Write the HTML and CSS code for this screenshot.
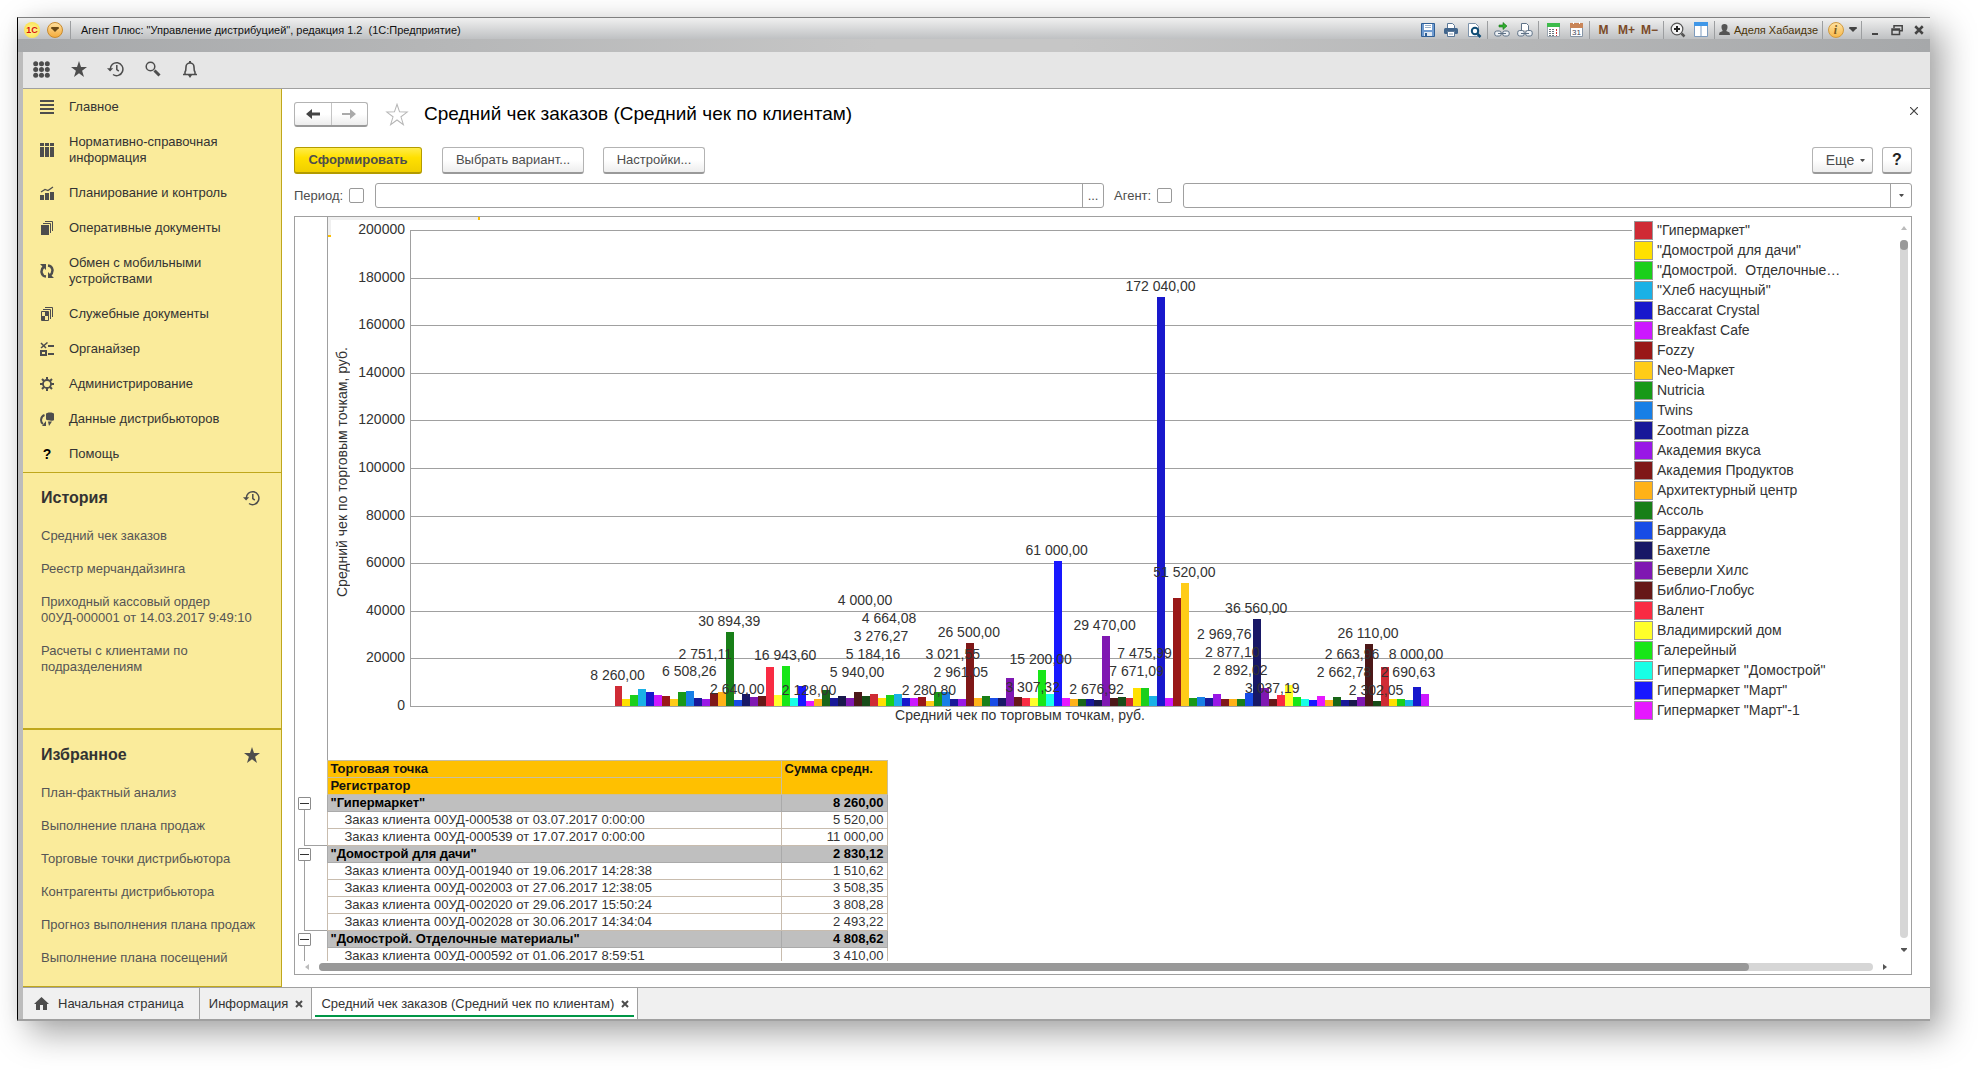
FILE: index.html
```html
<!DOCTYPE html>
<html lang="ru">
<head>
<meta charset="utf-8">
<title>Агент Плюс: "Управление дистрибуцией"</title>
<link rel="stylesheet" href="styles.css">
</head>
<body>
<svg class="defs" aria-hidden="true">
  <symbol id="i-star" viewBox="0 0 16 16"><path d="M8 0l2 5.900 6 .2-4.900 3.700L13 16l-5-3.700L3 16l1.900-6.200L0 6.100l6-.2z"/></symbol>
  <symbol id="i-history" viewBox="0 0 17 16"><path fill="none" stroke="currentColor" stroke-width="1.500" d="M3.300 8.500A6.300 6.500 0 1 1 6 13.500M9.800 4v4.600l2 1.600"/><path d="M0 7.200h6.200L3.100 10.400z"/></symbol>
  <symbol id="i-close" viewBox="0 0 8 8"><path fill="none" stroke="currentColor" stroke-width="2" d="M1 1l6 6M7 1L1 7"/></symbol>
  <symbol id="i-down" viewBox="0 0 6 4"><path d="M0 0h6v1L3 4 0 1z"/></symbol>
</svg>

<div class="window">
  <header class="titlebar">
    <span class="logo">1С</span>
    <button class="orb" aria-label="Главное меню"><svg width="8" height="5"><use href="#i-down"/></svg></button>
    <span class="sep"></span>
    <h1>Агент Плюс: "Управление дистрибуцией", редакция 1.2&nbsp; (1С:Предприятие)</h1>
    <div class="tools">
      <button aria-label="Сохранить"><svg width="16" height="16"><path fill="#6f9bd0" stroke="#2f5f96" d="M1.500 1.500h13v13h-13z"/><path fill="#fff" d="M4 2h8v6H4z"/><path stroke="#9ab0c8" d="M5 3.500h6M5 5.500h6"/><path fill="#dfe8f2" d="M4 10h8v4H4z"/><path fill="#2f5f96" d="M5 11h2v3H5z"/></svg></button>
      <button aria-label="Печать"><svg width="16" height="16"><path fill="#fff" stroke="#5b7898" d="M4.500 6V1.500h5l2 2V6"/><rect x="1" y="6" width="14" height="6" rx="1.500" fill="#41658c"/><path fill="#fff" stroke="#5b7898" d="M4.500 9.500h7v5h-7z"/><path stroke="#8aa0b8" d="M6 12h4"/></svg></button>
      <button aria-label="Просмотр"><svg width="16" height="16"><path fill="#fff" stroke="#7d93ab" d="M2.500 1.500h7l3 3v10h-10z"/><circle cx="9" cy="9" r="3.200" fill="#fff" stroke="#0f4c75" stroke-width="2"/><path stroke="#0f4c75" stroke-width="2.500" d="M11.500 12l3 3"/></svg></button>
      <span class="sep"></span>
      <button aria-label="Перейти по ссылке"><svg width="16" height="16"><path fill="#2fae2f" stroke="#157515" stroke-width=".6" d="M5 3h4V.5L13 4 9 7.500V5H5z"/><g fill="#eef2f6" stroke="#5f7287"><rect x=".7" y="9" width="6.500" height="5" rx="2"/><rect x="8.700" y="9" width="6.500" height="5" rx="2"/></g><path stroke="#5f7287" d="M4 11.500h8"/></svg></button>
      <button aria-label="Получить ссылку"><svg width="16" height="16"><path fill="#fff" stroke="#5f7287" d="M4.500 8V1.500h5l2 2V8"/><g fill="#eef2f6" stroke="#5f7287"><rect x=".7" y="8.500" width="6.500" height="5.500" rx="2"/><rect x="8.700" y="8.500" width="6.500" height="5.500" rx="2"/></g><path stroke="#5f7287" d="M4 11.500h8"/></svg></button>
      <span class="sep"></span>
      <button aria-label="Калькулятор"><svg width="16" height="16"><path fill="#fff" stroke="#9aa5b0" d="M2.500 1.500h12v13h-12z"/><path fill="#3dbb4b" d="M2 1h13v4H2z"/><path stroke="#6c7780" stroke-dasharray="2 1" d="M4 7.500h6M4 9.500h6M4 11.500h6M4 13.500h6"/><path stroke="#c33" stroke-dasharray="2 1" d="M11.500 7v7"/></svg></button>
      <button aria-label="Календарь"><svg width="16" height="16"><path fill="#fff" stroke="#8795a5" d="M2.500 2.500h12v12h-12z"/><path fill="#c98558" d="M2 1h13v5H2z"/><path stroke="#fff" d="M5.500 0v2M11.500 0v2"/><text x="4" y="13" font-size="8" fill="#445">31</text></svg></button>
      <span class="sep"></span>
      <button class="mem">M</button>
      <button class="mem">M+</button>
      <button class="mem">M−</button>
      <span class="sep"></span>
      <button aria-label="Масштаб"><svg width="16" height="16"><circle cx="7" cy="7" r="5.800" fill="#f4f4f4" stroke="#555" stroke-width="1.200"/><path stroke="#222" stroke-width="2" d="M4 7h6M7 4v6"/><path stroke="#555" stroke-width="2.500" d="M11.500 11.500l3 3"/></svg></button>
      <button aria-label="Панели"><svg width="16" height="16"><path fill="#fff" stroke="#7d9bbd" d="M1.500 1.500h13v13h-13zM8 4v10"/><path fill="#3f97e8" d="M1 0h14v4H1z"/></svg></button>
      <span class="sep"></span>
      <button class="user"><svg width="11" height="12"><path fill="#555" d="M5.500 0a3 3 0 0 1 3 3.200C8.500 5 7.500 6 7.300 7l3.200 1.500.5 2.500H0l.5-2.500L3.700 7C3.500 6 2.500 5 2.500 3.200A3 3 0 0 1 5.500 0z"/></svg>Аделя Хабаидзе</button>
      <span class="sep"></span>
      <button class="info" aria-label="О программе"><span class="info-orb">i</span><svg width="8" height="5"><use href="#i-down"/></svg></button>
      <span class="sep"></span>
      <button class="win" aria-label="Свернуть"><svg width="12" height="12"><path fill="#444" d="M3 9h6v2H3z"/></svg></button>
      <button class="win" aria-label="Восстановить"><svg width="12" height="12"><path fill="none" stroke="#444" stroke-width="1.500" d="M3 4V1.800h8.200v5H9M1 5h7.500v5.500H1zM1 6h7"/></svg></button>
      <button class="win" aria-label="Закрыть"><svg width="10" height="10"><use href="#i-close"/></svg></button>
    </div>
  </header>

  <div class="client">
    <nav class="toolbar">
      <button aria-label="Разделы"><svg width="17" height="17"><g fill="currentColor"><circle cx="2.700" cy="2.700" r="2.500"/><circle cx="8.500" cy="2.700" r="2.500"/><circle cx="14.300" cy="2.700" r="2.500"/><circle cx="2.700" cy="8.500" r="2.500"/><circle cx="8.500" cy="8.500" r="2.500"/><circle cx="14.300" cy="8.500" r="2.500"/><circle cx="2.700" cy="14.300" r="2.500"/><circle cx="8.500" cy="14.300" r="2.500"/><circle cx="14.300" cy="14.300" r="2.500"/></g></svg></button>
      <button aria-label="Избранное"><svg width="16" height="16"><use href="#i-star"/></svg></button>
      <button aria-label="История"><svg width="17" height="16"><use href="#i-history"/></svg></button>
      <button aria-label="Поиск"><svg width="16" height="16"><circle cx="5.500" cy="5.500" r="4.300" fill="none" stroke="currentColor" stroke-width="1.500"/><path stroke="currentColor" stroke-width="3" d="M9.500 9.500l5 5"/></svg></button>
      <button aria-label="Оповещения"><svg width="16" height="17"><path fill="none" stroke="currentColor" stroke-width="1.600" d="M1 13.500h14M3 13V11c1-1 1-3 1-5 0-2.500 2-4 4-4s4 1.500 4 4c0 2 0 4 1 5v2"/><path fill="currentColor" d="M7 0h2v2H7zM6 14h4l-2 3z"/></svg></button>
    </nav>

    <div class="main">
      <aside class="sidebar">
        <ul class="menu">
          <li><a href="#"><svg width="14" height="14"><path stroke="currentColor" stroke-width="2" d="M0 1h14M0 5h14M0 9h14M0 13h14"/></svg>Главное</a></li>
          <li><a href="#"><svg width="14" height="14"><path fill="currentColor" d="M0 0h4v3H0zM5 0h4v3H5zM10 0h4v3h-4zM0 4h4v10H0zM5 4h4v10H5zM10 4h4v10h-4z"/></svg>Нормативно-справочная информация</a></li>
          <li><a href="#"><svg width="14" height="14"><path fill="currentColor" d="M0 9h4v5H0zM5 7h4v7H5zM10 6h4v8h-4z"/><path fill="none" stroke="currentColor" stroke-width="1.300" d="M1 6l4-2.500 3 1L13 1"/></svg>Планирование и контроль</a></li>
          <li><a href="#"><svg width="14" height="14"><path fill="currentColor" d="M1 4h8v10H1z"/><path fill="none" stroke="currentColor" d="M3 2.500h7.500V12M5 .5h7.500V10"/></svg>Оперативные документы</a></li>
          <li><a href="#"><svg width="14" height="14"><path fill="none" stroke="currentColor" stroke-width="2.500" d="M6 12.500C1 12 0 6 4 2.500M8 1.500c5 .5 6 6.500 2 10"/><path fill="currentColor" d="M0 0h6v6zM14 14H8V8z"/></svg>Обмен с мобильными устройствами</a></li>
          <li><a href="#"><svg width="14" height="14"><path fill="none" stroke="currentColor" d="M1.500 4.500h7v9h-7zM3 2.500h7.500V12M5 .5h7.500V10"/><path fill="currentColor" d="M5 5h3v4H5zM2 9h3v4H2z"/></svg>Служебные документы</a></li>
          <li><a href="#"><svg width="14" height="14"><path fill="none" stroke="currentColor" stroke-width="2" d="M1 9h5v4H1z"/><path fill="none" stroke="currentColor" stroke-width="1.500" d="M1 1l5 5M1 6L7.500.5"/><path stroke="currentColor" stroke-width="2" d="M8 4h6M8 12h6"/></svg>Органайзер</a></li>
          <li><a href="#"><svg width="14" height="14"><circle cx="7" cy="7" r="4" fill="none" stroke="currentColor" stroke-width="1.800"/><path stroke="currentColor" stroke-width="2" d="M7 0v3M7 11v3M0 7h3M11 7h3M2 2l2 2M10 10l2 2M12 2l-2 2M4 10l-2 2"/></svg>Администрирование</a></li>
          <li><a href="#"><svg width="14" height="14"><path fill="none" stroke="currentColor" stroke-width="2" d="M4.500 3C.5 4.500 0 10 3 12"/><path fill="currentColor" d="M6 2c0-2 8-2 8 0v6c0 1-6 1-8-.5zM2 14h4V9zM8 9.500h4L9 14z"/></svg>Данные дистрибьюторов</a></li>
          <li><a href="#"><b class="q">?</b>Помощь</a></li>
        </ul>
        <section class="history">
          <h2>История <svg width="17" height="16"><use href="#i-history"/></svg></h2>
          <ul>
            <li><a href="#">Средний чек заказов</a></li>
            <li><a href="#">Реестр мерчандайзинга</a></li>
            <li><a href="#">Приходный кассовый ордер 00УД-000001 от 14.03.2017 9:49:10</a></li>
            <li><a href="#">Расчеты с клиентами по подразделениям</a></li>
          </ul>
        </section>
        <section class="favourites">
          <h2>Избранное <svg width="16" height="16"><use href="#i-star"/></svg></h2>
          <ul>
            <li><a href="#">План-фактный анализ</a></li>
            <li><a href="#">Выполнение плана продаж</a></li>
            <li><a href="#">Торговые точки дистрибьютора</a></li>
            <li><a href="#">Контрагенты дистрибьютора</a></li>
            <li><a href="#">Прогноз выполнения плана продаж</a></li>
            <li><a href="#">Выполнение плана посещений</a></li>
          </ul>
        </section>
      </aside>

      <main class="content">
        <div class="heading">
          <div class="nav-pair">
            <button aria-label="Назад"><svg width="14" height="10"><path fill="#444" d="M6 0v3.500h8v3H6V10L0 5z"/></svg></button>
            <button aria-label="Вперед"><svg width="14" height="10"><path fill="#aaa" d="M8 0v4H0v2h8v4l6-5z"/></svg></button>
          </div>
          <button class="plain fav" aria-label="В избранное"><svg width="24" height="23" viewBox="-1 -1 18 18"><path fill="#fff" stroke="#b5b5b5" stroke-width=".8" d="M8 0l2 5.900 6 .2-4.900 3.700L13 16l-5-3.700L3 16l1.900-6.200L0 6.100l6-.2z"/></svg></button>
          <h2>Средний чек заказов (Средний чек по клиентам)</h2>
          <button class="plain close" aria-label="Закрыть"><svg width="8" height="8"><path stroke="#444" stroke-width="1.200" d="M0 0l8 8M8 0L0 8"/></svg></button>
        </div>

        <div class="commands">
          <button class="btn primary">Сформировать</button>
          <button class="btn variant">Выбрать вариант...</button>
          <button class="btn settings">Настройки...</button>
          <button class="btn more">Еще <svg width="5" height="3" viewBox="0 0 6 4"><use href="#i-down"/></svg></button>
          <button class="btn help">?</button>
        </div>

        <div class="filters">
          <label for="use-period">Период:</label>
          <input type="checkbox" id="use-period">
          <div class="field period"><input type="text" aria-label="Период"><button aria-label="Выбрать период">...</button></div>
          <label for="use-agent">Агент:</label>
          <input type="checkbox" id="use-agent">
          <div class="field agent"><input type="text" aria-label="Агент"><button aria-label="Выбрать агента"><svg width="5" height="3" viewBox="0 0 6 4"><use href="#i-down"/></svg></button></div>
        </div>

        <div class="report">
          <div class="viewport">
            <div class="chart">
              <span class="edge-top"></span><span class="edge-left"></span>
              <div class="y-title">Средний чек по торговым точкам, руб.</div>
              <div class="ticks"><span>200000</span><span>180000</span><span>160000</span><span>140000</span><span>120000</span><span>100000</span><span>80000</span><span>60000</span><span>40000</span><span>20000</span><span>0</span></div>
              <div class="plot-col">
                <div class="plot">
                  <div class="lines"><i></i><i></i><i></i><i></i><i></i><i></i><i></i><i></i><i></i><i></i></div>
                  <div class="bars" id="bars"></div>
                </div>
                <div class="x-title">Средний чек по торговым точкам, руб.</div>
              </div>
              <ul class="legend" id="legend"></ul>
            </div>
            <table>
              <colgroup><col class="c-gut"><col class="c-name"><col class="c-sum"></colgroup>
              <thead>
                <tr><td rowspan="2"></td><th>Торговая точка</th><th rowspan="2">Сумма средн.</th></tr>
                <tr><th>Регистратор</th></tr>
              </thead>
              <tbody>
                <tr class="grp"><td rowspan="3" class="gut"><button aria-label="Свернуть группу"></button></td><td>"Гипермаркет"</td><td>8 260,00</td></tr>
                <tr><td>Заказ клиента 00УД-000538 от 03.07.2017 0:00:00</td><td>5 520,00</td></tr>
                <tr><td>Заказ клиента 00УД-000539 от 17.07.2017 0:00:00</td><td>11 000,00</td></tr>
              </tbody>
              <tbody>
                <tr class="grp"><td rowspan="5" class="gut"><button aria-label="Свернуть группу"></button></td><td>"Домострой для дачи"</td><td>2 830,12</td></tr>
                <tr><td>Заказ клиента 00УД-001940 от 19.06.2017 14:28:38</td><td>1 510,62</td></tr>
                <tr><td>Заказ клиента 00УД-002003 от 27.06.2017 12:38:05</td><td>3 508,35</td></tr>
                <tr><td>Заказ клиента 00УД-002020 от 29.06.2017 15:50:24</td><td>3 808,28</td></tr>
                <tr><td>Заказ клиента 00УД-002028 от 30.06.2017 14:34:04</td><td>2 493,22</td></tr>
              </tbody>
              <tbody>
                <tr class="grp"><td rowspan="2" class="gut"><button aria-label="Свернуть группу"></button></td><td>"Домострой. Отделочные материалы"</td><td>4 808,62</td></tr>
                <tr><td>Заказ клиента 00УД-000592 от 01.06.2017 8:59:51</td><td>3 410,00</td></tr>
              </tbody>
            </table>
          </div>
          <div class="vscroll"><svg width="6" height="4"><path fill="#bbb" d="M3 0l3 4H0z"/></svg><span class="track"><span class="thumb"></span></span><svg width="6" height="4"><use href="#i-down"/></svg></div>
          <div class="hscroll"><svg width="4" height="6"><path fill="#bbb" d="M4 0v6L0 3z"/></svg><span class="track"><span class="thumb"></span></span><svg width="4" height="6"><path d="M0 0v6l4-3z"/></svg></div>
        </div>
      </main>
    </div>

    <footer class="tabs">
      <a href="#" class="tab home"><svg width="15" height="13"><path fill="currentColor" d="M7.500 0L15 7h-2v6H9V8H6v5H2V7H0z"/></svg>Начальная страница</a>
      <div class="tab"><a href="#">Информация</a><button aria-label="Закрыть вкладку"><svg width="8" height="8"><use href="#i-close"/></svg></button></div>
      <div class="tab active"><a href="#">Средний чек заказов (Средний чек по клиентам)</a><button aria-label="Закрыть вкладку"><svg width="8" height="8"><use href="#i-close"/></svg></button></div>
    </footer>
  </div>
</div>
<script src="chart.js"></script>
</body>
</html>
```
FILE: styles.css
```css
* { box-sizing: border-box; }
body {
  margin: 0;
  padding: 17px 48px 49px 17px;
  height: 100vh;
  background: #fff;
  color: #333;
  font: 13px/16px "Liberation Sans", Arial, sans-serif;
  overflow: hidden;
}
ul { list-style: none; margin: 0; padding: 0; }
h1, h2 { margin: 0; }
a { color: inherit; text-decoration: none; }
button { font: inherit; color: inherit; padding: 0; border: 0; background: none; }
svg { fill: currentColor; flex: none; display: block; }
.defs { display: none; }

.window {
  height: 100%;
  display: flex;
  flex-direction: column;
  border-left: 1px solid #000;
  border-top: 1px solid #808080;
  border-bottom: 2px solid #a0a0a0;
  background: #bcbcbc;
  box-shadow: 12px 12px 32px rgba(0, 0, 0, .36), 0 0 14px rgba(0, 0, 0, .04);
}
.client { flex: 1; min-height: 0; margin-left: 5px; display: flex; flex-direction: column; background: #fff; }

/* title bar */
.titlebar {
  height: 34px;
  padding: 2px 0 13px 6px;
  display: flex;
  align-items: center;
  background:
    linear-gradient(#f0f0f0, #bfc1c3) 0 0 / 100% 21px no-repeat,
    linear-gradient(90deg, #a6a8aa, #c6c6c6 45%, #c6c6c6 55%, #a6a8aa);
}
.titlebar h1 { font-size: 11px; line-height: 16px; font-weight: 400; color: #111; margin-left: 8px; }
.logo {
  width: 16px; height: 16px; border-radius: 8px;
  background: radial-gradient(#fff7a0, #f9dc3a);
  color: #d8110c; font-size: 9px; font-weight: 700; text-align: center;
}
.orb { width: 16px; height: 16px; margin: 0 5px 0 7px; border-radius: 8px; border: 1px solid #c98a2c; background: linear-gradient(#ffdf9c, #f5ac3c); display: flex; align-items: center; justify-content: center; color: #6b4a16; }
.sep { width: 1px; height: 18px; background: #9c9ea0; margin: 0 2px; }
.tools { margin-left: auto; display: flex; align-items: center; }
.tools button { width: 23px; height: 18px; display: flex; align-items: center; justify-content: center; }
.tools .mem { font-size: 12px; font-weight: 700; color: #7a4a28; }
.tools .user { width: 103px; gap: 4px; font-size: 11px; color: #4a3408; white-space: nowrap; }
.tools .info { width: 34px; gap: 5px; color: #444; }
.info-orb { width: 16px; height: 16px; border-radius: 8px; border: 1px solid #d09a40; background: linear-gradient(#ffe2a0, #f7b84a); font: italic 700 12px/14px "Liberation Serif", serif; color: #7a5a20; }
.tools .win { width: 22px; color: #444; }

/* toolbar */
.toolbar { height: 37px; padding-bottom: 2px; display: flex; align-items: center; background: #e6e6e6; border-bottom: 1px solid #a0a0a0; color: #4d4d4d; }
.toolbar button { width: 37px; height: 34px; display: flex; align-items: center; justify-content: center; }

.main { flex: 1; min-height: 0; display: flex; }

/* sidebar */
.sidebar { width: 259px; flex: none; display: flex; flex-direction: column; background: #faeb9b; border-right: 1px solid #bfa71c; border-bottom: 1px solid #bfa71c; overflow: hidden; }
.menu { padding-top: 1px; color: #333; }
.menu a { display: flex; align-items: center; gap: 15px; padding: 9px 44px 10px 17px; }
.menu svg { color: #4d4d4d; }
.menu .q { width: 14px; text-align: center; font-size: 14px; color: #000; }
.sidebar section { border-top: 1px solid #bfa71c; padding: 0 21px 0 18px; color: #555; }
.sidebar .history { flex: 1; }
.sidebar .favourites { border-top-width: 2px; height: 258px; }
.sidebar h2 { display: flex; justify-content: space-between; align-items: center; height: 47px; padding-top: 3px; font-size: 16px; line-height: 20px; color: #333; }
.sidebar h2 svg { color: #4d4d4d; }
.sidebar section a { display: block; padding: 8px 0 9px; }

/* content */
.content { flex: 1; min-width: 0; display: flex; flex-direction: column; padding: 12px 18px 12px 12px; color: #4d4d4d; }
.heading { display: flex; align-items: center; height: 26px; }
.nav-pair { display: flex; width: 74px; height: 25px; border: 1px solid #b3b3b3; border-bottom: 2px solid #999; border-radius: 3px; background: linear-gradient(#fff 50%, #ededed); }
.nav-pair button { flex: 1; display: flex; align-items: center; justify-content: center; }
.nav-pair button + button { border-left: 1px solid #c4c4c4; }
.fav { margin: 0 15px 0 17px; }
.heading h2 { font-size: 19px; line-height: 24px; font-weight: 400; color: #000; }
.heading .close { margin: 0 -6px 6px auto; }

.commands { display: flex; margin-top: 20px; }
.btn { height: 27px; border: 1px solid #b3b3b3; border-bottom: 2px solid #999; border-radius: 3px; background: linear-gradient(#fff 50%, #ededed); display: flex; align-items: center; justify-content: center; white-space: nowrap; }
.primary { width: 128px; font-size: 13px; font-weight: 700; border-color: #b39b00; background: linear-gradient(#ffec4a, #ffe000 40%, #f0cf00); }
.variant { width: 142px; margin-left: 20px; }
.settings { width: 102px; margin-left: 19px; }
.more { width: 61px; margin-left: auto; gap: 6px; font-size: 14px; padding-left: 6px; }
.help { width: 30px; margin-left: 9px; font-size: 16px; font-weight: 700; color: #222; }

.filters { display: flex; align-items: center; margin-top: 9px; height: 25px; }
.filters input[type="checkbox"] { appearance: none; width: 15px; height: 15px; margin: 0 0 0 6px; border: 1px solid #999; border-radius: 2px; background: #fff; }
.filters label { flex: none; }
.field { flex: 1; margin-left: 11px; display: flex; height: 25px; border: 1px solid #a0a0a0; border-radius: 3px; }
.field input { flex: 1; min-width: 0; border: 0; padding: 0 6px; outline: 0; background: none; font: inherit; }
.field button { width: 21px; border-left: 1px solid #a0a0a0; display: flex; align-items: center; justify-content: center; }
.period { margin-right: 10px; }

/* report */
.report { flex: 1; min-height: 0; margin-top: 8px; border: 1px solid #a0a0a0; display: grid; grid-template: minmax(0, 1fr) 13px / minmax(0, 1fr) 12px; }
.viewport { overflow: hidden; background: linear-gradient(#a0a0a0, #a0a0a0) 32px 0 / 1px 100% no-repeat; }
.chart { position: relative; height: 543px; margin-left: 32px; display: grid; grid-template-columns: 28px 55px minmax(0, 1fr) 267px; align-items: start; font-size: 14px; color: #333; }
.edge-top, .edge-left { position: absolute; left: 1px; top: 0; background: #f0f0f0; }
.edge-top { width: 152px; height: 3px; border-right: 2px solid #ffc000; }
.edge-left { width: 3px; height: 20px; border-bottom: 2px solid #ffc000; }
.y-title { writing-mode: vertical-rl; transform: rotate(180deg); height: 250px; margin-top: 130px; margin-left: 7px; justify-self: start; white-space: nowrap; }
.ticks { height: 492px; margin-top: 4px; padding-right: 5px; display: flex; flex-direction: column; justify-content: space-between; text-align: right; }
.plot-col { padding-top: 13px; }
.plot { position: relative; height: 477px; border: solid #a0a0a0; border-width: 0 0 1px 1px; }
.lines { height: 100%; display: flex; flex-direction: column; }
.lines i { flex: 1; border-top: 1px solid #a0a0a0; }
.bars { position: absolute; top: 0; bottom: 0; left: calc(100% / 6); right: calc(100% / 6); display: flex; align-items: flex-end; }
.bar { flex: 1; min-width: 0; }
.slot { flex: 1; min-width: 0; height: 100%; position: relative; display: flex; align-items: flex-end; }
.slot b { position: absolute; left: -41px; right: -39px; z-index: 1; font-weight: 400; text-align: center; color: #333; }
.x-title { text-align: center; padding-right: 2px; }
.legend { padding: 3px 0 0 2px; }
.legend li { display: flex; align-items: center; gap: 4px; height: 20px; white-space: pre; line-height: 16px; }
.legend i { width: 19px; height: 19px; border: 1px solid #999; }

table { border-collapse: collapse; table-layout: fixed; width: 592px; color: #333; }
.c-gut { width: 32px; }
.c-name { width: 454px; }
.c-sum { width: 106px; }
td, th { height: 17px; padding: 0 3px; line-height: 16px; border: 1px solid #c8bcae; text-align: left; vertical-align: top; white-space: nowrap; }
th { background: #ffc000; color: #111; border-color: #c8bea0; }
td:first-child:not(.gut) { padding-left: 17px; }
td:last-child { text-align: right; }
thead td, td.gut { border: 0; }
.grp td { background: #bfbfbf; color: #000; font-weight: 700; border-color: #aaa; }
.grp td:nth-child(2) { padding-left: 3px; }
.grp td.gut { position: relative; background: none; padding: 2px 0 0 3px; }
.gut::after { content: ""; position: absolute; left: 9px; top: 15px; bottom: 0; right: 0; border: solid #a0a0a0; border-width: 0 0 1px 1px; }
.gut button { display: block; width: 13px; height: 13px; border: 1px solid #8c8c8c; border-radius: 1px; background: linear-gradient(#333, #333) center / 9px 1px no-repeat #fff; }

.vscroll { display: flex; flex-direction: column; align-items: center; padding: 9px 3px 9px 1px; gap: 10px; color: #555; }
.hscroll { grid-column: 1 / 3; display: flex; align-items: center; padding: 0 24px 2px 10px; gap: 10px; color: #555; }
.track { flex: 1; background: #d6d6d6; border-radius: 4px; display: flex; }
.thumb { background: #999; border-radius: 4px; }
.vscroll .track { width: 8px; }
.vscroll .thumb { width: 8px; height: 10px; }
.hscroll .track { height: 8px; }
.hscroll .thumb { width: 92%; height: 8px; }

/* window tabs */
.tabs { height: 32px; display: flex; background: #f0f0f0; border-top: 1px solid #a0a0a0; }
.tab { display: flex; align-items: center; gap: 7px; padding: 0 8px 0 9px; border-right: 1px solid #a0a0a0; white-space: nowrap; }
.tab button { color: #4d4d4d; }
.tab svg { color: #4d4d4d; }
.home { gap: 9px; padding: 0 15px 0 11px; }
.active { background: linear-gradient(#009646, #009646) center 27px / calc(100% - 6px) 2px no-repeat #fff; }
```
FILE: chart.js
```js
const palette = [
  "#cf2b35", "#ffe000", "#1bcf1b", "#1ab1e6", "#1818cc", "#cc18ff", "#991818", "#ffcc18",
  "#189918", "#187fe6", "#181899", "#9918e6", "#7f1818", "#ffb218", "#187f18", "#184ce6",
  "#181866", "#7f18b2", "#661818", "#f92b43", "#ffff29", "#18e618", "#18ffe6", "#1818ff",
  "#e618ff", "#ffb218", "#186618", "#181899", "#18184c", "#7f18b2", "#4c1818", "#184c18"
];

const clients = [
  "\"Гипермаркет\"", "\"Домострой для дачи\"", "\"Домострой.  Отделочные…", "\"Хлеб насущный\"",
  "Baccarat Crystal", "Breakfast Cafe", "Fozzy", "Neo-Маркет", "Nutricia", "Twins", "Zootman pizza",
  "Академия вкуса", "Академия Продуктов", "Архитектурный центр", "Ассоль", "Барракуда", "Бахетле",
  "Беверли Хилс", "Библио-Глобус", "Валент", "Владимирский дом", "Галерейный",
  "Гипермаркет \"Домострой\"", "Гипермаркет \"Март\"", "Гипермаркет \"Март\"-1"
];

// average order, thousands of roubles
const values = [
  8.3, 2.9, 4.7, 7.1, 5.9, 4.7, 4.2, 2.9, 5.9, 6.5, 3.3, 2.8, 5.5, 5.9, 30.9, 2.6, 5.1, 3.8, 4.2, 16.4,
  4.7, 16.9, 3.3, 8.3, 2.1, 2.9, 6.8, 3.3, 4.2, 3.3, 5.9, 4.2, 5.2, 3.3, 4.7, 5.1, 3.3, 3.3, 3.8, 2.3,
  5.9, 5.9, 3, 3, 26.5, 3.3, 4.2, 3.3, 3.3, 11.8, 3.8, 3.3, 3.3, 15.2, 5.1, 61, 3.3, 2.9, 2.9, 2.9,
  2.7, 29.5, 3.3, 3.8, 3.3, 7.7, 7.5, 4.2, 172, 3.3, 45.4, 51.5, 3.3, 3.8, 3.3, 5.1, 2.9, 2.9, 2.9, 5.5,
  36.6, 7.6, 3, 4.7, 8.8, 3.8, 2.9, 2.6, 4.2, 2.6, 3.8, 2.7, 2.7, 3.8, 26.1, 2.3, 16.4, 2.9, 2.9, 2.7,
  8, 5.1
];

// bar index -> [caption, height above the axis]
const captions = {
  0: ["8 260,00", 23], 9: ["6 508,26", 27], 11: ["2 751,11", 44], 14: ["30 894,39", 77],
  15: ["2 640,00", 9], 21: ["16 943,60", 43], 24: ["2 128,00", 8], 30: ["5 940,00", 26],
  32: ["5 184,16", 44], 33: ["3 276,27", 62], 31: ["4 000,00", 98], 34: ["4 664,08", 80],
  39: ["2 280,80", 8], 43: ["2 961,05", 26], 42: ["3 021,55", 44], 44: ["26 500,00", 66],
  52: ["3 307,32", 11], 53: ["15 200,00", 39], 55: ["61 000,00", 148], 60: ["2 676,92", 9],
  61: ["29 470,00", 73], 65: ["7 671,09", 27], 66: ["7 475,99", 45], 68: ["172 040,00", 412],
  71: ["51 520,00", 126], 76: ["2 969,76", 64], 77: ["2 877,10", 46], 78: ["2 892,02", 28],
  82: ["3 037,19", 10], 80: ["36 560,00", 90], 91: ["2 662,78", 26], 92: ["2 663,96", 44],
  94: ["26 110,00", 65], 95: ["2 302,05", 8], 99: ["2 690,63", 26], 100: ["8 000,00", 44]
};

const bars = document.getElementById("bars");
values.forEach((value, i) => {
  const slot = document.createElement("div");
  slot.className = "slot";
  const bar = document.createElement("div");
  bar.className = "bar";
  bar.style.height = value / 2 + "%";
  bar.style.background = palette[i % palette.length];
  slot.append(bar);
  if (captions[i]) {
    const text = document.createElement("b");
    text.textContent = captions[i][0];
    text.style.bottom = captions[i][1] + "px";
    slot.append(text);
  }
  bars.append(slot);
});

const legend = document.getElementById("legend");
clients.forEach((name, i) => {
  const item = document.createElement("li");
  const swatch = document.createElement("i");
  swatch.style.background = palette[i];
  item.append(swatch, name);
  legend.append(item);
});
```
